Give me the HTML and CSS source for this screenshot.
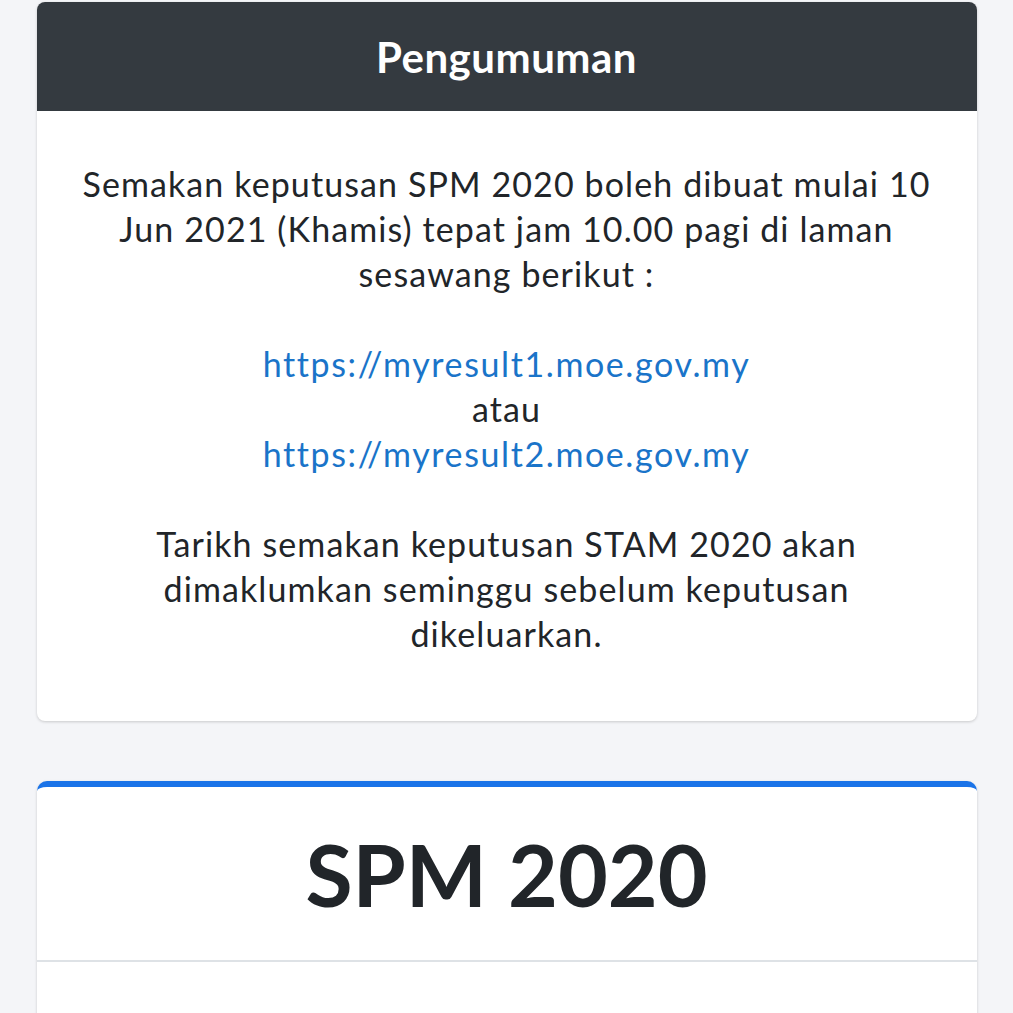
FILE: index.html
```html
<!DOCTYPE html>
<html lang="ms">
<head>
<meta charset="utf-8">
<title>Pengumuman</title>
<link rel="stylesheet" href="styles.css">
</head>
<body>
<main class="page">
  <section class="card notice">
    <header class="notice-head">
      <h2 class="notice-title">Pengumuman</h2>
    </header>
    <div class="notice-body">
      <p>Semakan keputusan SPM 2020 boleh dibuat mulai 10<br>Jun 2021 (Khamis) tepat jam 10.00 pagi di laman<br>sesawang berikut :</p>
      <p><a href="#" class="link">https://myresult1.moe.gov.my</a><br>atau<br><a href="#" class="link">https://myresult2.moe.gov.my</a></p>
      <p>Tarikh semakan keputusan STAM 2020 akan<br>dimaklumkan seminggu sebelum keputusan<br>dikeluarkan.</p>
    </div>
  </section>
  <section class="card exam">
    <div class="exam-head">
      <h1 class="exam-title">SPM 2020</h1>
    </div>
    <div class="exam-body"></div>
  </section>
</main>
</body>
</html>
```
FILE: styles.css
```css
html, body {
  margin: 0;
  padding: 0;
}
body {
  background: #f4f5f8;
  font-family: Lato, "Liberation Sans", sans-serif;
  color: #212529;
}
.page {
  width: 940px;
  margin: 0 auto;
  padding-top: 2px;
  display: flex;
  flex-direction: column;
  gap: 60px;
}
.card {
  background: #ffffff;
  border-radius: 8px;
  box-shadow: 0 1px 3px rgba(0, 0, 0, 0.18);
  overflow: hidden;
}
.notice-head {
  background: #343a40;
  height: 109px;
  display: flex;
  align-items: center;
  justify-content: center;
}
.notice-title {
  margin: 0;
  color: #ffffff;
  font-size: 42px;
  font-weight: 700;
  letter-spacing: 0.5px;
  line-height: 1;
}
.notice-body {
  padding: 50px 20px 65px;
  text-align: center;
  font-size: 34px;
  letter-spacing: 1.1px;
  line-height: 45px;
}
.notice-body p {
  margin: 0 0 45px;
}
.notice-body p:last-child {
  margin-bottom: 0;
}
.link {
  color: #1a74c9;
  text-decoration: none;
  letter-spacing: 1.6px;
}
.exam {
  border-top: 6px solid #1a73e8;
  border-radius: 10px 10px 0 0;
}
.exam-head {
  height: 173px;
  display: flex;
  align-items: center;
  justify-content: center;
  border-bottom: 2px solid #dee2e6;
}
.exam-title {
  margin: 0;
  font-size: 86px;
  font-weight: 700;
  line-height: 1;
  color: #212529;
}
.exam-body {
  height: 80px;
}
```
